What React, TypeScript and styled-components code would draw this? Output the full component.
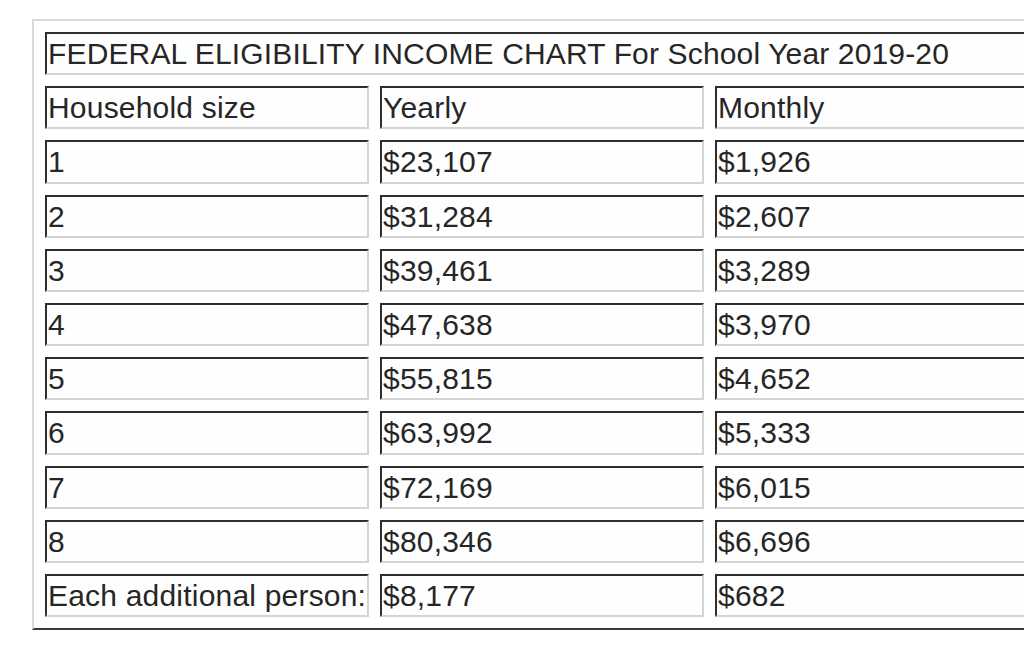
import React from 'react';
import styled, { createGlobalStyle } from 'styled-components';

const GlobalStyle = createGlobalStyle`
  html, body {
    margin: 0;
    padding: 0;
    background: #ffffff;
    overflow: hidden;
  }
  body {
    width: 1024px;
    height: 652px;
  }
`;

const Page = styled.div`
  padding: 19px 0 0 32px;
  width: 1100px;
`;

const Table = styled.table`
  border-collapse: separate;
  border-spacing: 11px;
  table-layout: fixed;
  width: 1020px;
  border-style: solid;
  border-width: 2px;
  border-color: #dadada #3a3a3a #3a3a3a #dadada;
  font-family: 'Liberation Sans', Arial, sans-serif;
  font-size: 30px;
  color: #262626;
`;

const Cell = styled.td<{ $title?: boolean }>`
  box-sizing: border-box;
  height: 43.2px;
  padding: 0 1px;
  line-height: 39px;
  white-space: nowrap;
  overflow: hidden;
  border-style: solid;
  border-width: 2px;
  border-color: #2e2e2e #d4d4d4 #d4d4d4 #2e2e2e;
  background: #fefefe;
  letter-spacing: ${(p) => (p.$title ? '0.15px' : '0.2px')};
`;

interface Row {
  size: string;
  yearly: string;
  monthly: string;
}

const rows: Row[] = [
  { size: 'Household size', yearly: 'Yearly', monthly: 'Monthly' },
  { size: '1', yearly: '$23,107', monthly: '$1,926' },
  { size: '2', yearly: '$31,284', monthly: '$2,607' },
  { size: '3', yearly: '$39,461', monthly: '$3,289' },
  { size: '4', yearly: '$47,638', monthly: '$3,970' },
  { size: '5', yearly: '$55,815', monthly: '$4,652' },
  { size: '6', yearly: '$63,992', monthly: '$5,333' },
  { size: '7', yearly: '$72,169', monthly: '$6,015' },
  { size: '8', yearly: '$80,346', monthly: '$6,696' },
  { size: 'Each additional person:', yearly: '$8,177', monthly: '$682' },
];

export default function App() {
  return (
    <Page>
      <GlobalStyle />
      <Table>
        <colgroup>
          <col style={{ width: 324 }} />
          <col style={{ width: 324 }} />
          <col style={{ width: 324 }} />
        </colgroup>
        <tbody>
          <tr>
            <Cell colSpan={3} $title>
              FEDERAL ELIGIBILITY INCOME CHART For School Year 2019-20
            </Cell>
          </tr>
          {rows.map((r) => (
            <tr key={r.size}>
              <Cell>{r.size}</Cell>
              <Cell>{r.yearly}</Cell>
              <Cell>{r.monthly}</Cell>
            </tr>
          ))}
        </tbody>
      </Table>
    </Page>
  );
}
